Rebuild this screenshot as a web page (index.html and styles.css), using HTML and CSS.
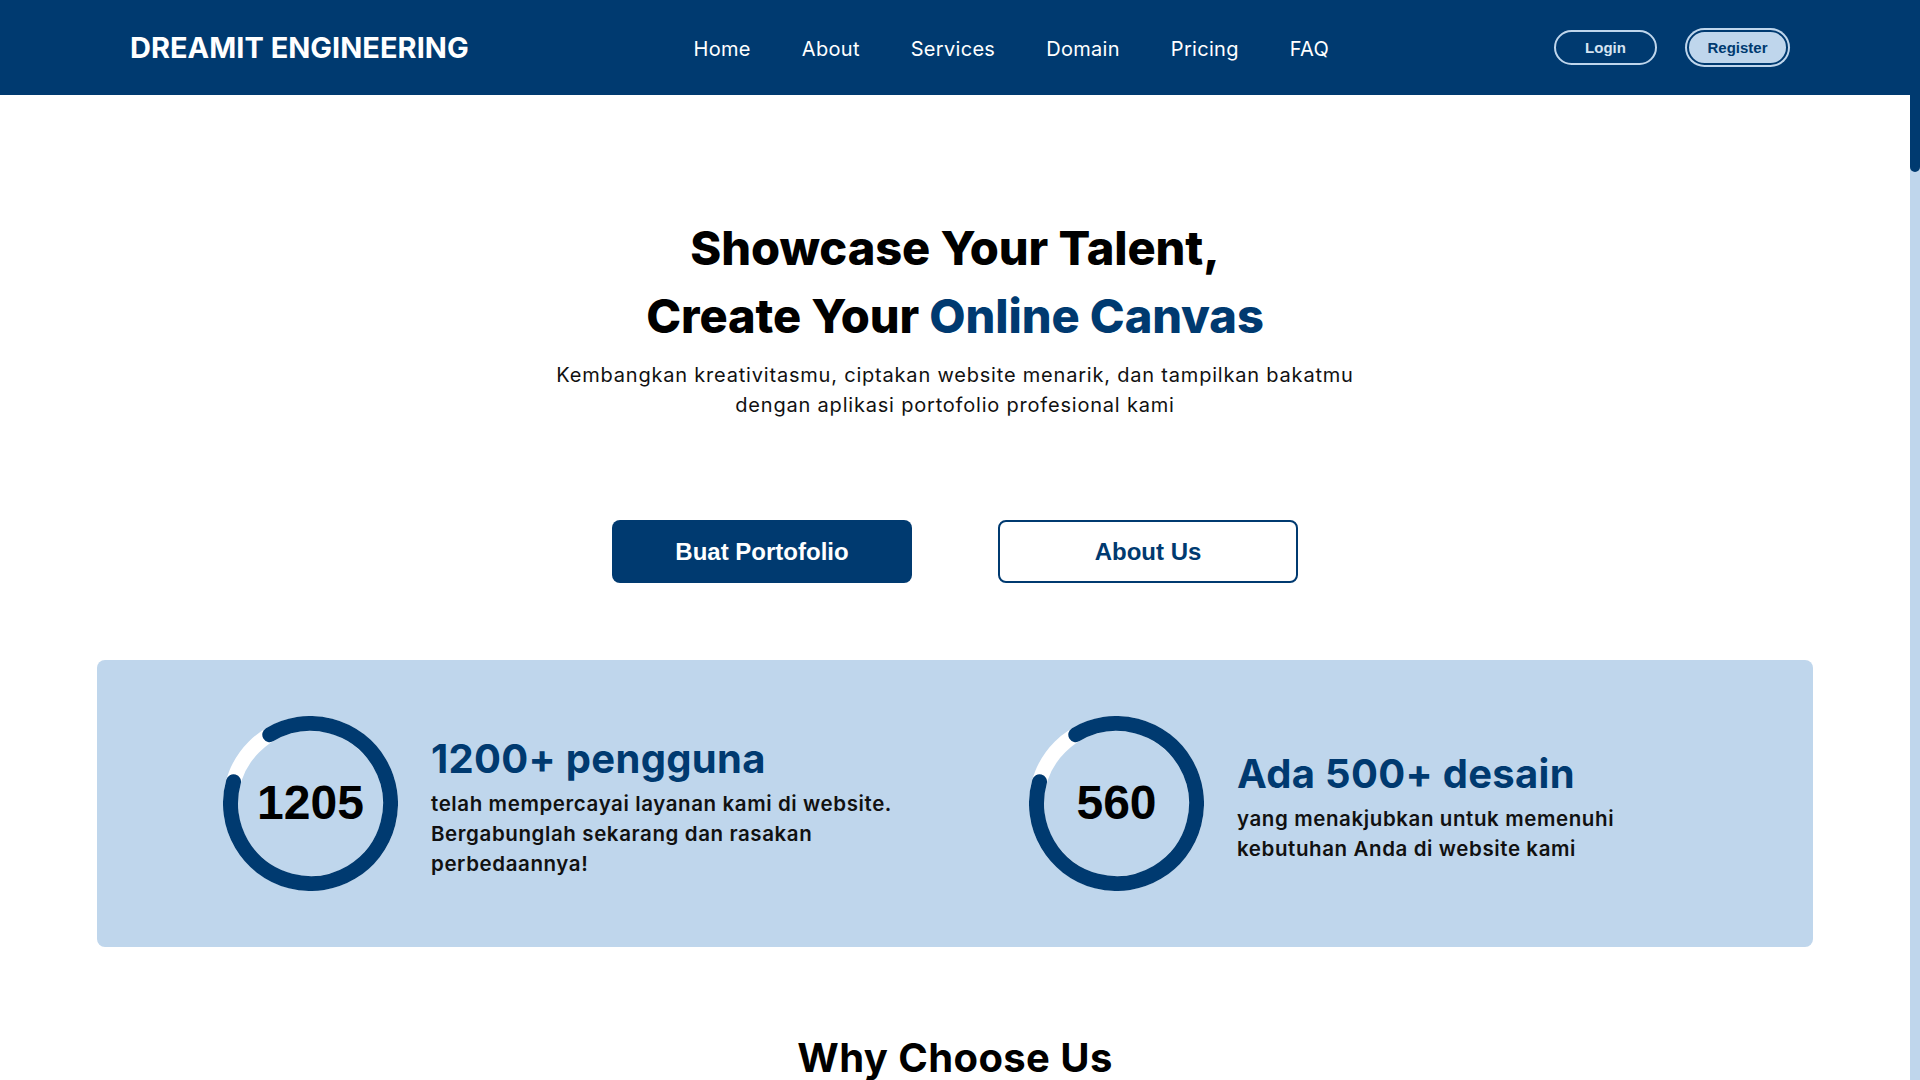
FILE: index.html
```html
<!DOCTYPE html>
<html lang="id">
<head>
<meta charset="utf-8">
<title>Dreamit Engineering</title>
<link rel="stylesheet" href="styles.css">
</head>
<body>
<div class="page">
  <header class="navbar">
    <a class="logo" href="#">DREAMIT ENGINEERING</a>
    <nav class="nav-links">
      <a href="#">Home</a>
      <a href="#">About</a>
      <a href="#">Services</a>
      <a href="#">Domain</a>
      <a href="#">Pricing</a>
      <a href="#">FAQ</a>
    </nav>
    <div class="auth">
      <a class="pill pill-login" href="#">Login</a>
      <a class="pill pill-register" href="#">Register</a>
    </div>
  </header>

  <main>
    <section class="hero">
      <h1 class="hero-title">Showcase Your Talent,<br>Create Your <span class="accent">Online Canvas</span></h1>
      <p class="hero-sub">Kembangkan kreativitasmu, ciptakan website menarik, dan tampilkan bakatmu<br>dengan aplikasi portofolio profesional kami</p>
      <div class="hero-actions">
        <a class="btn btn-solid" href="#">Buat Portofolio</a>
        <a class="btn btn-outline" href="#">About Us</a>
      </div>
    </section>

    <section class="stats">
      <div class="stat">
        <div class="ring">
          <svg viewBox="0 0 175 175" width="175" height="175">
            <circle class="ring-track" cx="87.5" cy="87.5" r="80"/>
            <circle class="ring-bar" cx="87.5" cy="87.5" r="80" stroke-dasharray="441 503" transform="rotate(239.4 87.5 87.5)"/>
          </svg>
          <span class="ring-num">1205</span>
        </div>
        <div class="stat-text">
          <h2 class="stat-title">1200+ pengguna</h2>
          <p class="stat-desc">telah mempercayai layanan kami di website.<br>Bergabunglah sekarang dan rasakan<br>perbedaannya!</p>
        </div>
      </div>
      <div class="stat">
        <div class="ring">
          <svg viewBox="0 0 175 175" width="175" height="175">
            <circle class="ring-track" cx="87.5" cy="87.5" r="80"/>
            <circle class="ring-bar" cx="87.5" cy="87.5" r="80" stroke-dasharray="441 503" transform="rotate(239.4 87.5 87.5)"/>
          </svg>
          <span class="ring-num">560</span>
        </div>
        <div class="stat-text">
          <h2 class="stat-title">Ada 500+ desain</h2>
          <p class="stat-desc">yang menakjubkan untuk memenuhi<br>kebutuhan Anda di website kami</p>
        </div>
      </div>
    </section>

    <section class="why">
      <h2 class="why-title">Why Choose Us</h2>
    </section>
  </main>
</div>

<div class="scrollbar" aria-hidden="true">
  <div class="scrollbar-thumb"></div>
</div>
</body>
</html>
```

FILE: styles.css
```css
* { box-sizing: border-box; }

html, body {
  height: 100%;
  overflow: hidden;
}

body {
  margin: 0;
  font-family: "Inter", "Open Sans", sans-serif;
  color: #000;
  background: #fff;
}

a { text-decoration: none; color: inherit; }

.page {
  margin-right: 10px;
}

/* drawn scrollbar, sits over the right edge of the window */
.scrollbar {
  position: fixed;
  top: 0;
  right: 0;
  width: 10px;
  height: 100vh;
  background: #bfd6ec;
}

.scrollbar-thumb {
  height: 172px;
  background: #003a70;
  border-radius: 0 0 5px 5px;
}

.navbar {
  height: 95px;
  background: #003a70;
  display: flex;
  align-items: center;
  justify-content: space-between;
  padding: 0 122px 0 130px;
}

.logo {
  color: #fff;
  font-size: 29px;
  font-weight: 700;
  letter-spacing: 0;
}

.nav-links {
  display: flex;
  gap: 51px;
  margin-top: 2px;
}

.nav-links a {
  color: #fff;
  font-size: 20px;
  font-weight: 400;
  letter-spacing: 0.3px;
}

.auth {
  display: flex;
  gap: 30px;
  align-items: center;
}

.pill {
  display: flex;
  align-items: center;
  justify-content: center;
  width: 103px;
  height: 35px;
  border-radius: 18px;
  font-family: "Liberation Sans", Arial, sans-serif;
  font-weight: 700;
  font-size: 15px;
}

.pill-login {
  border: 2px solid #bfd6ec;
  color: #d6e4f2;
}

.pill-register {
  width: 101px;
  background: #bfd6ec;
  color: #003a70;
  border: 2px solid #003a70;
  box-shadow: 0 0 0 2px #bfd6ec;
}

.hero {
  padding-top: 119px;
  text-align: center;
}

.hero-title {
  margin: 0;
  font-size: 47px;
  line-height: 68px;
  font-weight: 800;
  letter-spacing: -0.1px;
}

.accent { color: #003a70; }

.hero-sub {
  margin: 10px 0 0;
  font-size: 20px;
  line-height: 30px;
  font-weight: 400;
  letter-spacing: 0.8px;
  color: #111;
}

.hero-actions {
  display: flex;
  justify-content: center;
  gap: 86px;
  margin-top: 100px;
}

.btn {
  display: flex;
  align-items: center;
  justify-content: center;
  width: 300px;
  height: 63px;
  border-radius: 8px;
  font-family: "Liberation Sans", Arial, sans-serif;
  font-weight: 700;
  font-size: 24px;
}

.btn-solid {
  background: #003a70;
  color: #fff;
}

.btn-outline {
  background: #fff;
  color: #003a70;
  border: 2px solid #003a70;
}

.stats {
  margin: 77px 97px 0;
  height: 287px;
  background: #bfd6ec;
  border-radius: 8px;
  display: grid;
  grid-template-columns: minmax(0, 1fr) minmax(0, 1fr);
  column-gap: 148px;
  padding: 0 126px;
  align-items: center;
}

.stat {
  display: flex;
  align-items: center;
  gap: 33px;
}

.ring {
  position: relative;
  width: 175px;
  height: 175px;
  flex: none;
}

.ring svg { display: block; }

.ring-track {
  fill: none;
  stroke: #fff;
  stroke-width: 15;
}

.ring-bar {
  fill: none;
  stroke: #003a70;
  stroke-width: 15;
  stroke-linecap: round;
}

.ring-num {
  position: absolute;
  inset: 0;
  display: flex;
  align-items: center;
  justify-content: center;
  font-family: "Liberation Sans", Arial, sans-serif;
  font-weight: 700;
  font-size: 48px;
  color: #000;
  padding-bottom: 2px;
}

.stat-text {
  flex: none;
}

.stat-title {
  margin: 0;
  font-size: 40px;
  line-height: 60px;
  font-weight: 700;
  color: #003a70;
  letter-spacing: 0.3px;
  white-space: nowrap;
}

.stat-desc {
  margin: 0;
  font-size: 20.5px;
  line-height: 30px;
  font-weight: 600;
  letter-spacing: 0.6px;
  color: #111;
  white-space: nowrap;
}

.why {
  min-height: 600px;
  text-align: center;
  padding-top: 81px;
}

.why-title {
  margin: 0;
  font-size: 40px;
  line-height: 60px;
  font-weight: 700;
  letter-spacing: 0.4px;
}
```
